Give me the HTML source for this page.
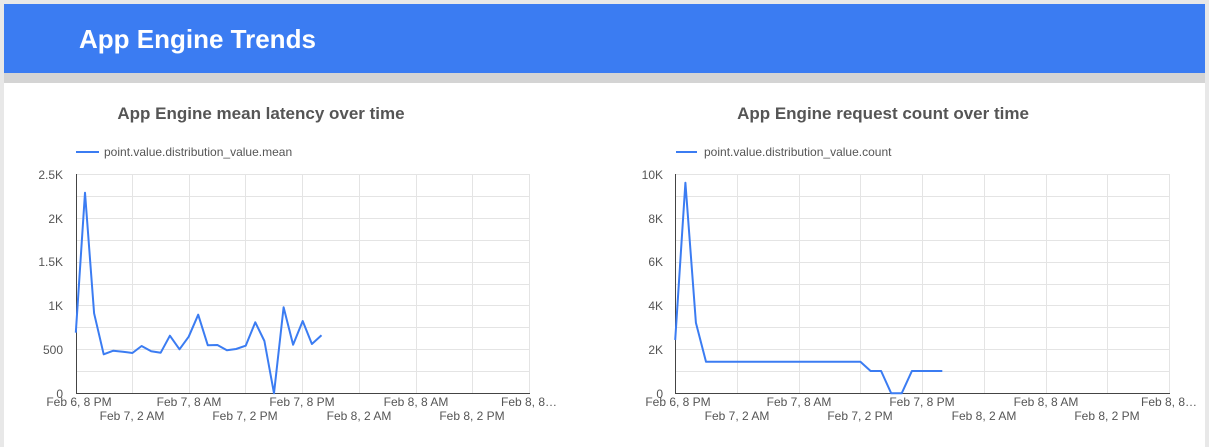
<!DOCTYPE html>
<html><head><style>
body{margin:0;width:1209px;height:447px;background:#e8e8e8;overflow:hidden;font-family:"Liberation Sans",sans-serif;}
#hdr{position:absolute;left:4px;top:4px;width:1201px;height:69px;background:#3b7cf2;}
#hdr span{position:absolute;left:75px;top:20px;color:#fff;font-size:26px;font-weight:bold;}
#bar{position:absolute;left:4px;top:73px;width:1201px;height:10px;background:#d4d4d4;}
#body{position:absolute;left:4px;top:83px;width:1201px;height:364px;background:#fff;}
svg{position:absolute;left:0;top:0}
</style></head><body>
<div id="hdr"><span>App Engine Trends</span></div>
<div id="bar"></div>
<div id="body"></div>
<svg width="1209" height="447" font-family="Liberation Sans, sans-serif">
<g fill="#555" font-weight="bold" font-size="17" text-anchor="middle">
<text x="261" y="119">App Engine mean latency over time</text>
<text x="883" y="119">App Engine request count over time</text>
</g>
<line x1="76" y1="152" x2="99" y2="152" stroke="#3b7cf2" stroke-width="2"/>
<text x="104" y="156" font-size="12" fill="#555">point.value.distribution_value.mean</text>
<line x1="676" y1="152" x2="697" y2="152" stroke="#3b7cf2" stroke-width="2"/>
<text x="704" y="156" font-size="12" fill="#555">point.value.distribution_value.count</text>
<g stroke="#e4e4e4" stroke-width="1">
<path d="M76 174.5H529M76 196.5H529M76 218.5H529M76 240.5H529M76 262.5H529M76 284.5H529M76 305.5H529M76 327.5H529M76 349.5H529M76 371.5H529"/>
<path d="M132.5 174V393M189.5 174V393M245.5 174V393M302.5 174V393M359.5 174V393M416.5 174V393M472.5 174V393M529.5 174V393"/>
<path d="M675 174.5H1169M675 196.5H1169M675 218.5H1169M675 240.5H1169M675 262.5H1169M675 284.5H1169M675 305.5H1169M675 327.5H1169M675 349.5H1169M675 371.5H1169"/>
<path d="M737.5 174V393M799.5 174V393M860.5 174V393M922.5 174V393M984.5 174V393M1046.5 174V393M1107.5 174V393M1169.5 174V393"/>
</g>
<path d="M76.5 174V393.5H530M675.5 174V393.5H1170" stroke="#444" fill="none"/>
<polyline fill="none" stroke="#3b7cf2" stroke-width="2" stroke-linejoin="round" points="75.8,332.7 85,192.7 94.1,313.3 103.7,354.3 113.3,350.7 122.8,351.7 132.4,353 141.6,346 151.2,351.3 160.7,352.7 169.9,335.7 179.5,349.3 188.7,336.7 198.2,314.7 207.8,345.3 217.4,345 226.9,350.3 236.1,349 245.7,345.7 255.3,322.3 264.4,341 274,393.3 283.6,307.3 293.1,344.7 302.7,321 311.9,344 321.5,335.3"/>
<polyline fill="none" stroke="#3b7cf2" stroke-width="2" stroke-linejoin="round" points="675.2,340 685.4,182.7 695.9,322.7 706,361.7 860.4,361.7 870.6,371 881.1,371 891.2,393.3 901.7,393.3 911.9,371 942.3,371"/>
<g font-size="12" fill="#555" text-anchor="end">
<text x="63" y="179">2.5K</text><text x="63" y="223">2K</text><text x="63" y="266">1.5K</text><text x="63" y="310">1K</text><text x="63" y="354">500</text><text x="63" y="398">0</text>
<text x="663" y="179">10K</text><text x="663" y="223">8K</text><text x="663" y="266">6K</text><text x="663" y="310">4K</text><text x="663" y="354">2K</text><text x="663" y="398">0</text>
</g>
<g font-size="12" fill="#555" text-anchor="middle">
<text x="79" y="406">Feb 6, 8 PM</text><text x="189" y="406">Feb 7, 8 AM</text><text x="302" y="406">Feb 7, 8 PM</text><text x="416" y="406">Feb 8, 8 AM</text><text x="529" y="406">Feb 8, 8…</text>
<text x="132" y="420">Feb 7, 2 AM</text><text x="245" y="420">Feb 7, 2 PM</text><text x="359" y="420">Feb 8, 2 AM</text><text x="472" y="420">Feb 8, 2 PM</text>
<text x="678" y="406">Feb 6, 8 PM</text><text x="799" y="406">Feb 7, 8 AM</text><text x="922" y="406">Feb 7, 8 PM</text><text x="1046" y="406">Feb 8, 8 AM</text><text x="1169" y="406">Feb 8, 8…</text>
<text x="737" y="420">Feb 7, 2 AM</text><text x="860" y="420">Feb 7, 2 PM</text><text x="984" y="420">Feb 8, 2 AM</text><text x="1107" y="420">Feb 8, 2 PM</text>
</g>
</svg>
</body></html>
